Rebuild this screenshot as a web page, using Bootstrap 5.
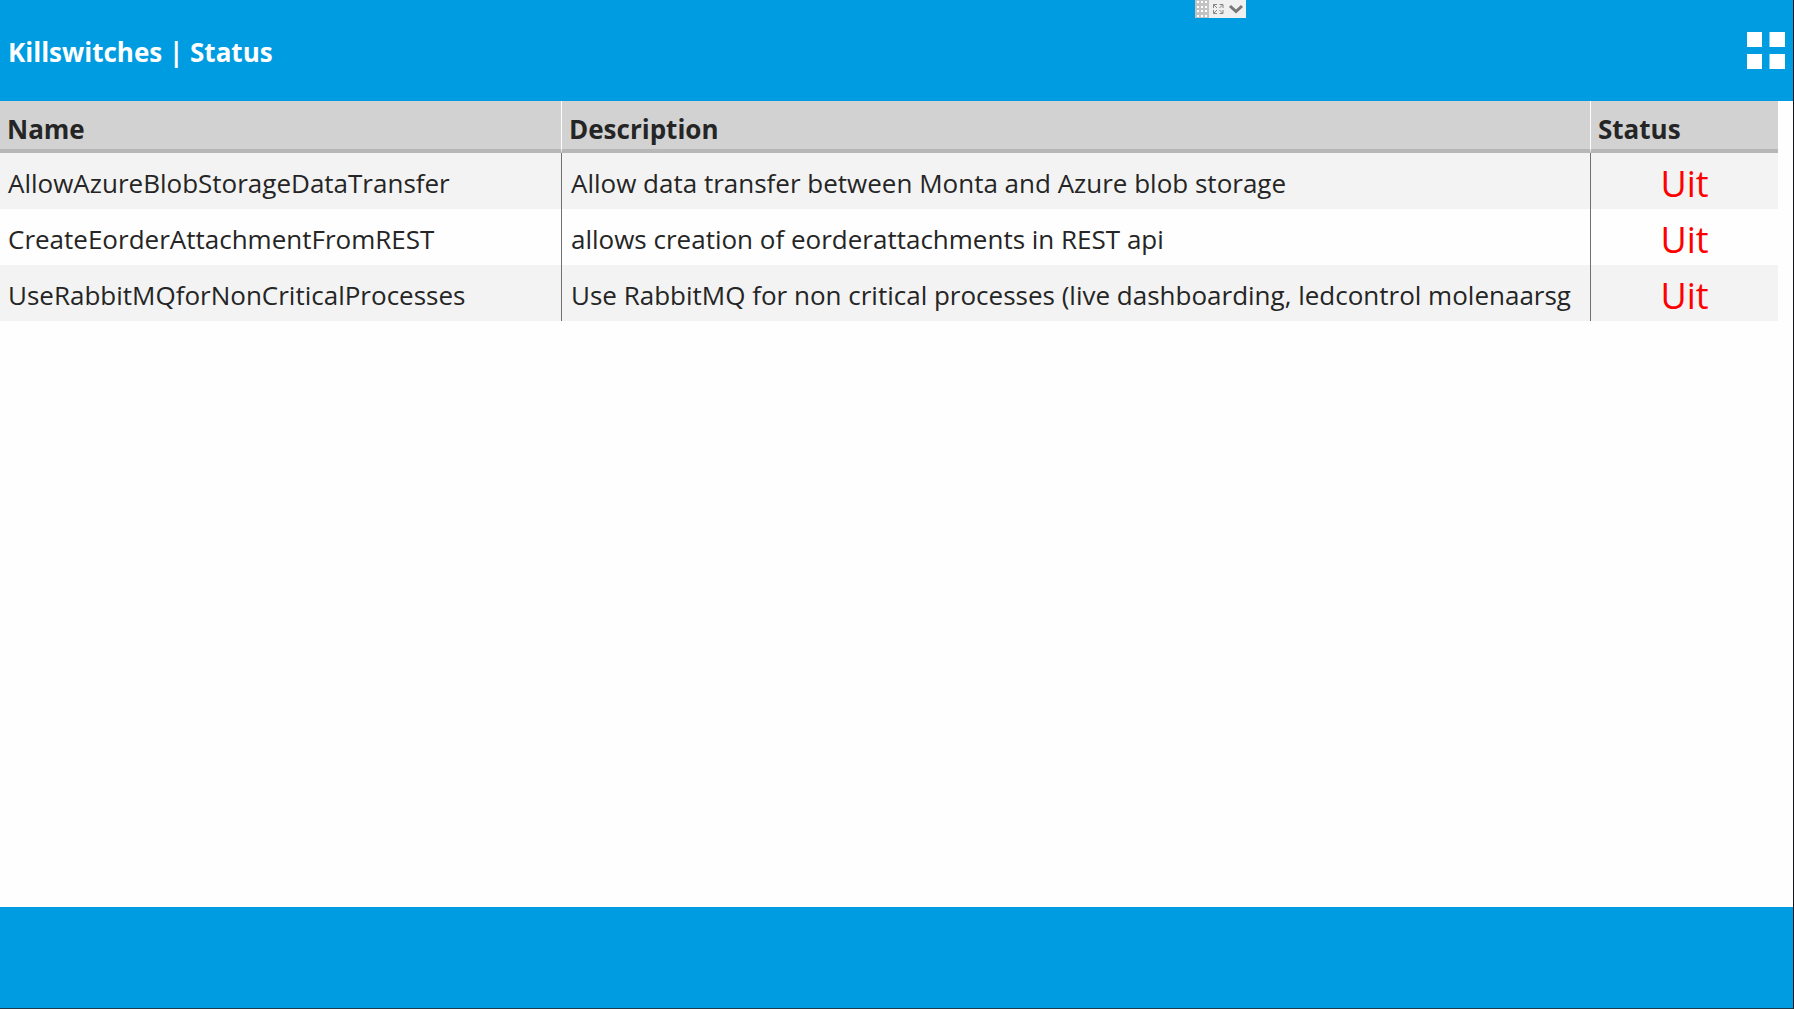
<!DOCTYPE html>
<html lang="nl">
<head>
<meta charset="utf-8">
<meta name="viewport" content="width=device-width, initial-scale=1">
<title>Killswitches | Status</title>
<link href="https://cdn.jsdelivr.net/npm/bootstrap@5.3.0/dist/css/bootstrap.min.css" rel="stylesheet">
<style>
:root { --brand: #009ce1; --ink: #252525; }
body { font-family: "Open Sans", "Noto Sans", sans-serif; font-size: 26px; line-height: 36px; color: var(--ink); background: #fefefe; border-right: 1px solid #101418; border-bottom: 1px solid #1d3a4a; }
.app-bar { background: var(--brand); height: 101px; padding: 0 8px; }
.app-title { font-size: 26px; line-height: 36px; font-weight: 700; padding-top: 2px; }
.tiles-btn { width: 40px; height: 40px; }
.top-handle { width: 51px; height: 18px; background: #f0f0f0; left: 1195px; }
.grid-wrap { padding-right: 15px; }
.switch-grid { table-layout: fixed; border-collapse: separate; border-spacing: 0; }
.switch-grid th, .switch-grid td { padding: 0 8px; border: 0; overflow: hidden; white-space: nowrap; vertical-align: middle; }
.switch-grid thead th { background: #d2d2d2; color: var(--ink); height: 52px; padding: 7px 7px 0; border-bottom: 4px solid #b7b7b7; border-right: 1px solid #fefefe; }
.switch-grid tbody td { height: 56px; padding-top: 3px; border-right: 1px solid #707070; box-shadow: none; color: var(--ink); background: #fefefe; }
.switch-grid tbody tr:nth-child(odd) td { background: #f3f3f3; }
.switch-grid th:last-child, .switch-grid tbody td:last-child { border-right: 0; }
.col-name { width: 562px; }
.col-state { width: 187px; }
.clip { overflow: hidden; padding-left: 1px; }
.switch-grid tbody .state-off { color: #f00; font-size: 36px; line-height: 48px; padding-top: 5px; }
</style>
<script src="https://cdn.jsdelivr.net/npm/bootstrap@5.3.0/dist/js/bootstrap.bundle.min.js"></script>
</head>
<body class="d-flex flex-column min-vh-100">
<header class="app-bar d-flex align-items-center justify-content-between position-relative text-white">
  <h1 class="app-title mb-0">Killswitches | Status</h1>
  <button type="button" class="top-handle btn border-0 rounded-0 p-0 d-flex position-absolute top-0" aria-label="Werkbalk">
    <svg width="51" height="18" viewBox="0 0 51 18" fill="none">
      <path fill="#c3c3c3" d="M0 0h14v18H0z"/>
      <path stroke="#fff" stroke-width="2" stroke-dasharray="2 2" d="M2 2h10M2 7h10M2 11h10M2 16h10"/>
      <path stroke="#858585" d="M18.500 8V4.500H22M24.500 4.500H28V8M28 10v3.500h-3.500M22 13.500h-3.500V10M19 5l3 3M27.500 5l-3 3M19 13l3-3M27.500 13l-3-3"/>
      <path stroke="#777" stroke-width="3" d="M35 6l6 5.500L47 6"/>
    </svg>
  </button>
  <button type="button" class="tiles-btn btn border-0 rounded-0 p-0 d-flex justify-content-end" aria-label="Menu">
    <svg width="38" height="38" viewBox="0 0 38 38" fill="#fff"><path d="M0 1h15v15H0zM22.500 1H38v15H22.500zM0 23h15v15H0zM22.500 23H38v15H22.500z"/></svg>
  </button>
</header>
<main class="grid-wrap flex-grow-1">
  <table class="switch-grid table mb-0">
    <colgroup><col class="col-name"><col><col class="col-state"></colgroup>
    <thead><tr><th scope="col">Name</th><th scope="col">Description</th><th scope="col">Status</th></tr></thead>
    <tbody>
      <tr><td>AllowAzureBlobStorageDataTransfer</td><td><div class="clip">Allow data transfer between Monta and Azure blob storage</div></td><td class="state-off text-center">Uit</td></tr>
      <tr><td>CreateEorderAttachmentFromREST</td><td><div class="clip">allows creation of eorderattachments in REST api</div></td><td class="state-off text-center">Uit</td></tr>
      <tr><td>UseRabbitMQforNonCriticalProcesses</td><td><div class="clip">Use RabbitMQ for non critical processes (live dashboarding, ledcontrol molenaarsg</div></td><td class="state-off text-center">Uit</td></tr>
    </tbody>
  </table>
</main>
<footer class="app-bar"></footer>
</body>
</html>
